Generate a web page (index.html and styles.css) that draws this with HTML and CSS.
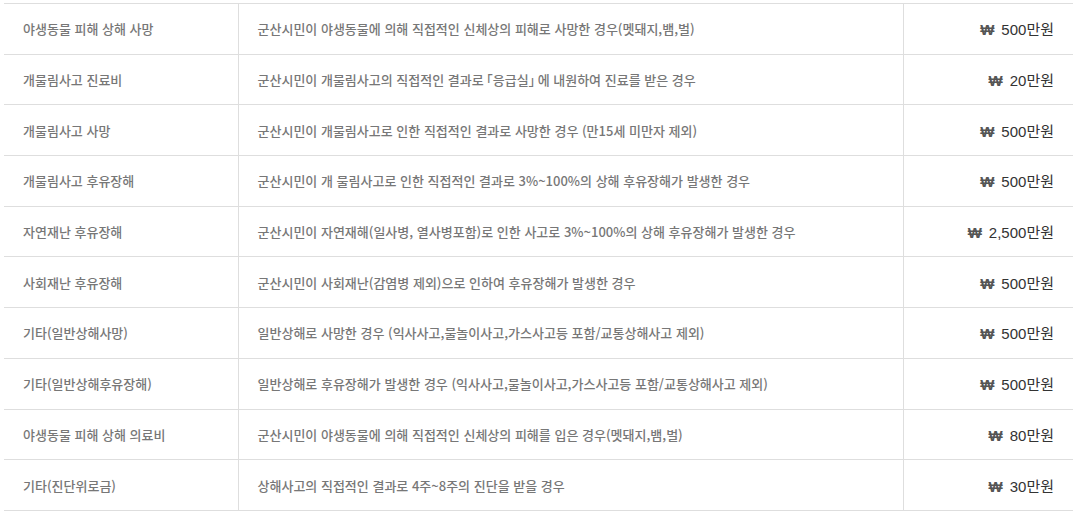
FILE: index.html
```html
<!DOCTYPE html>
<html lang="ko">
<head>
<meta charset="utf-8">
<link rel="stylesheet" href="styles.css">
</head>
<body>
<div class="wrap">
<table class="benefit">
  <colgroup><col class="c1"><col class="c2"><col class="c3"></colgroup>
  <tbody>
    <tr><td class="name">야생동물 피해 상해 사망</td><td class="desc">군산시민이 야생동물에 의해 직접적인 신체상의 피해로 사망한 경우(멧돼지,뱀,벌)</td><td class="amt"><span class="won">₩</span>500만원</td></tr>
    <tr><td class="name">개물림사고 진료비</td><td class="desc">군산시민이 개물림사고의 직접적인 결과<span class="tight">로</span>「응급실<span class="tight">」</span>에 내원하여 진료를 받은 경우</td><td class="amt"><span class="won">₩</span>20만원</td></tr>
    <tr><td class="name">개물림사고 사망</td><td class="desc">군산시민이 개물림사고로 인한 직접적인 결과로 사망한 경우 (만15세 미만자 제외)</td><td class="amt"><span class="won">₩</span>500만원</td></tr>
    <tr><td class="name">개물림사고 후유장해</td><td class="desc">군산시민이 개 물림사고로 인한 직접적인 결과로 3%~100%의 상해 후유장해가 발생한 경우</td><td class="amt"><span class="won">₩</span>500만원</td></tr>
    <tr><td class="name">자연재난 후유장해</td><td class="desc">군산시민이 자연재해(일사병, 열사병포함)로 인한 사고로 3%~100%의 상해 후유장해가 발생한 경우</td><td class="amt"><span class="won">₩</span>2,500만원</td></tr>
    <tr><td class="name">사회재난 후유장해</td><td class="desc">군산시민이 사회재난(감염병 제외)으로 인하여 후유장해가 발생한 경우</td><td class="amt"><span class="won">₩</span>500만원</td></tr>
    <tr><td class="name">기타(일반상해사망)</td><td class="desc">일반상해로 사망한 경우 (익사사고,물놀이사고,가스사고등 포함/교통상해사고 제외)</td><td class="amt"><span class="won">₩</span>500만원</td></tr>
    <tr><td class="name">기타(일반상해후유장해)</td><td class="desc">일반상해로 후유장해가 발생한 경우 (익사사고,물놀이사고,가스사고등 포함/교통상해사고 제외)</td><td class="amt"><span class="won">₩</span>500만원</td></tr>
    <tr><td class="name">야생동물 피해 상해 의료비</td><td class="desc">군산시민이 야생동물에 의해 직접적인 신체상의 피해를 입은 경우(멧돼지,뱀,벌)</td><td class="amt"><span class="won">₩</span>80만원</td></tr>
    <tr><td class="name">기타(진단위로금)</td><td class="desc">상해사고의 직접적인 결과로 4주~8주의 진단을 받을 경우</td><td class="amt"><span class="won">₩</span>30만원</td></tr>
  </tbody>
</table>
</div>
</body>
</html>
```
FILE: styles.css
```css
html, body {
  margin: 0;
  padding: 0;
  background: #fff;
}
.wrap {
  padding: 3px 6px 0 4px;
}
.benefit {
  width: 100%;
  border-collapse: collapse;
  table-layout: fixed;
  font-family: "Noto Sans CJK KR", "Noto Sans", sans-serif;
}
.c1 { width: 234px; }
.c2 { width: 665px; }
.c3 { width: auto; }
.benefit td {
  height: 49.7px;
  padding: 0;
  border-top: 1px solid #dedede;
  border-bottom: 1px solid #dedede;
  vertical-align: middle;
  font-size: 13px;
  font-weight: 500;
  letter-spacing: 0;
  color: #777;
  white-space: nowrap;
}
.benefit td.name {
  padding-left: 19px;
  border-right: 1px solid #dedede;
}
.benefit td.desc {
  padding-left: 19px;
  border-right: 1px solid #dedede;
}
.tight { letter-spacing: -4px; }
.benefit td.amt {
  text-align: right;
  padding-right: 19px;
  font-family: "Liberation Sans", Arial, "Noto Sans CJK KR", sans-serif;
  font-size: 15px;
  font-weight: 400;
  color: #333;
}
.won {
  color: #555;
  font-weight: bold;
  margin-right: 7px;
}
```
